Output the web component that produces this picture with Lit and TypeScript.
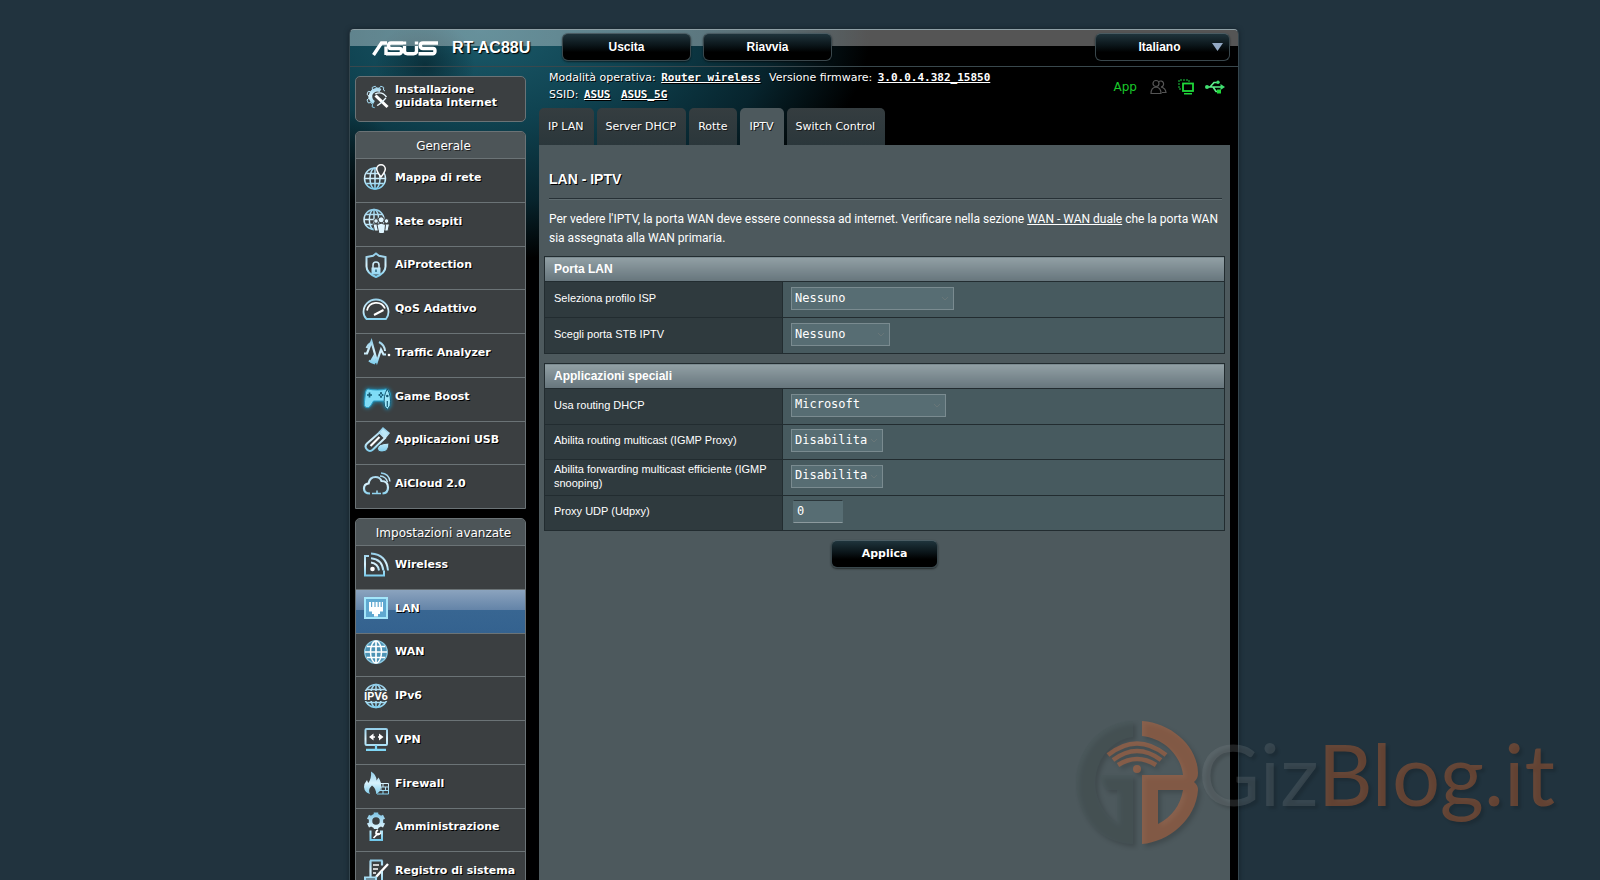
import { LitElement, html, css, svg } from "lit";
import { customElement, state } from "lit/decorators.js";

const icons: Record<string, unknown> = {
  wizard: svg`<path d="M23 9l-1.500-1 .2-2.600-2.900-1.200-1.600 2h-2.400l-1.600-2-3 1.200.3 2.600-1.700 1.700-2.600-.3-1.200 3 2 1.600v2.300l-2 1.600 1.200 3 2.600-.3 1.700 1.700-.3 2.600 2.500.8" stroke-width="1" fill="none"/><path d="M18.500 8.500a6.800 6.800 0 1 0-6.500 12" stroke-width="3.600"/><path d="M13.500 13.500l12 11.500" stroke="#fff" stroke-width="3"/><path d="M13 12c5-2.500 9-.5 11.500 3M15 23.500c3-1 5-3.500 9-7.500" stroke="#e8f8ff" stroke-width="1.300"/>`,
  map: svg`<circle cx="13" cy="15.500" r="10.500"/><ellipse cx="13" cy="15.500" rx="5" ry="10.500"/><path d="M13 5.500v20M2.500 15.500h21M4.500 10.500h15M4.600 20.500h16.800"/><path d="M19 14c-2.800-3.500-4.300-5.500-4.300-8a4.300 4.300 0 0 1 8.600 0c0 2.500-1.500 4.500-4.300 8z" fill="#3b3f41" stroke="#fff"/>`,
  guest: svg`<circle cx="12" cy="12.500" r="10"/><ellipse cx="12" cy="12.500" rx="4.700" ry="10"/><path d="M12 2.500v20M2 12.500h20M3.500 7.500h17M3.500 17.500h10"/><g fill="#dff5ff" stroke="#3b3f41" stroke-width="1"><circle cx="14" cy="14" r="2.300"/><circle cx="24.500" cy="14" r="2.300"/><path d="M11 17h5.500v7h-4zM22 17h5.500l-1.500 7h-4z"/><circle cx="19.200" cy="12.800" r="3"/><path d="M15 17.500q4.200-2.500 8.500 0l-.5 5-1 4h-5l-1-4z"/></g>`,
  shield: svg`<path d="M14 2.500l3 2.300 6.500 1.200v9.500q0 6.500-9.500 10.500q-9.500-4-9.500-10.500V6l6.500-1.200z" stroke-width="2"/><path d="M11 17v-3a3 3 0 0 1 6 0v3"/><rect x="9.500" y="16.500" width="9" height="7" fill="url(#ice)" stroke="none"/><path d="M14 18.500v2.500" stroke="#26647c"/>`,
  gauge: svg`<path d="M4.500 24h19.500q2.500-3 2.500-7a12.500 12.500 0 0 0-25 0q0 4 3 7z" stroke-width="1.800"/><path d="M5 15.500a9.500 9.500 0 0 1 18-2" stroke="#fff" stroke-width="1.800"/><path d="M12 20l9.500-5" stroke="#fff" stroke-width="2"/>`,
  traffic: svg`<path d="M13 25.500a11 11 0 0 1-6-3M17 4a11 11 0 0 1 6 9M4.500 10q2-4 5-5.500" stroke-width="2"/><path d="M8 23l4-7 3 9q-4 1-7-2z" fill="url(#ice)" stroke="none"/><path d="M2 15.500h3l4.500-12 5.500 20 4-12 2.500 5h2.500" stroke-width="2.200"/><circle cx="27" cy="17" r="1.300" fill="#fff" stroke="none"/>`,
  game: svg`<g transform="translate(2 4)"><path d="M4 3q4 1 9.500 1t8.500-1q3 0 4 4l.5 8-3 5q-3-1-4-5h-10l-3 5q-2 2.500-4.500 1.500t-1.500-6l1-9q.5-3.500 2.500-3.500z" fill="#7fdcf7" stroke="#2a9cc4" stroke-width="1"/><path d="M5.500 6.500v5M3 9h5" stroke="#155a74" stroke-width="1.700"/><g fill="#155a74" stroke="none"><circle cx="15.500" cy="9" r="1.100"/><circle cx="18.500" cy="9" r="1.100"/><circle cx="17" cy="7.200" r="1.100"/><circle cx="17" cy="10.800" r="1.100"/></g><path d="M20.500 20q-1.500-10 2.800-17 4.300 7 2.800 17l-2.800 3.500z" fill="#9fe8fb" stroke="#155a74" stroke-width="1"/><circle cx="23.300" cy="10" r="1.300" fill="#155a74" stroke="none"/><path d="M23.300 15v6" stroke="#155a74" stroke-width="1.200"/></g>`,
  usb: svg`<path d="M17.500 6.500L5 17.500q-3 3 0 6t6 0L23 12z" stroke-width="2"/><path d="M17.500 6l3.500-4 6 5-3.500 4.500z" fill="#bde8f8"/><path d="M8.500 20l9-9" stroke="#fff" stroke-width="2.200"/><path d="M15.500 22.500q0-5 11.500-5.500q0 9-7 9-4.500 0-4.500-3.500z" fill="url(#ice)" stroke="#3b3f41" stroke-width="1"/>`,
  cloud: svg`<path d="M8 23.500q-6 0-6-5 0-4.500 4.500-5 1.200-6.500 7-6.500 4.500 0 6 4 6.500 0 6.500 6.500 0 5.500-5.500 6" stroke-width="2.200"/><path d="M10 23.500h9M15 20.500v3" stroke-width="1.500"/><path d="M18 6q6 .5 7.500 6M19 3q8 .5 9 8.500" stroke-width="1.300"/>`,
  wireless: svg`<path d="M7 6H3V25.500h19v-5" stroke-width="2"/><circle cx="10.500" cy="19" r="2.300" fill="#fff" stroke="none"/><path d="M9 12.500q7 1 8 8M9 8.300q11 1 12.300 12.200M9 3.500q15.500 1 17 17" stroke-width="2"/>`,
  lan: svg`<rect x="3" y="4" width="22" height="20" fill="#5fa8d0" stroke="#a4e6fa" stroke-width="2"/><path d="M7 8h2v5h1.200V8h2.200v5h1.200V8h2v5h1.200V8h1.800v5h1.200V8H21v9.500h-3V20h-2v2.500h-4V20h-2v-2.500H7z" fill="#fff" stroke="none"/>`,
  wan: svg`<circle cx="14" cy="14" r="11.300" fill="#4d93b5" stroke="#8cc8e0" stroke-width="1.300"/><ellipse cx="14" cy="14" rx="5.500" ry="11" stroke="#fff"/><path d="M14 3v22M3 14h22M5 8.500h18M5 19.500h18" stroke="#fff" stroke-width="1.700"/>`,
  ipv6: svg`<circle cx="14" cy="14" r="11.500"/><ellipse cx="14" cy="14" rx="5.500" ry="11.500"/><path d="M14 3v22M5 7.500h18M5 20.500h18"/><rect x="1" y="9" width="26" height="10" fill="#3b3f41" stroke="none"/><text class="iptext" x="14" y="17.500" text-anchor="middle">IPV6</text>`,
  vpn: svg`<rect x="3.500" y="4" width="21.500" height="16" rx="1" stroke-width="2"/><path d="M9 12h4M20 12h-4" stroke="#fff"/><path d="M7 12l4.500-3.500v7zM21.500 12l-4.500-3.500v7z" fill="#fff" stroke="none"/><path d="M14 20v4M4 24.800h20" stroke="#7fd6f5" stroke-width="2.200"/>`,
  firewall: svg`<path d="M8 25q-5.500-1.500-6-7 0-3.500 3-7l1.200 3q3.500-4.500 2.800-11.500 5.500 3 5.500 9l2-3q3.500 5.500 2.500 10-1 5-5 6.500 .5-5-4-8.500-4.500 4-2 8.500z" fill="url(#ice)" stroke="none"/><path d="M15 25h11.500v-10.500h-8M16.500 18h10M15.500 21.500h11M21 14.500V18M19 18v3.500M23.500 18v3.500M21 21.500V25" stroke-width="1"/>`,
  admin: svg`<path d="M14 2.500v-3M14 16v-3M6 3.800l3 1.500M19 11l3 1.500M6 12.500l3-1.500M19 5.300l3-1.500" stroke-width="4.500"/><circle cx="14" cy="8" r="5.500" stroke-width="3.500"/><path d="M9.500 18.500h-1v8.500h11.500v-8.500h-2" stroke-width="2"/><path d="M11.500 25l5-5M16 17q-3 1.500-1.500 5M19 19.500q-2 3-4.500 1.500" stroke="#fff" stroke-width="1.700"/>`,
  log: svg`<path d="M8 3.500h12.500M8.500 3.500v17M20 3.500v5" stroke-width="2.200"/><path d="M11 8h6M11 12h5M11 16h3" stroke="#fff" stroke-width="1.500"/><path d="M26 7L14 20" stroke="#fff" stroke-width="2.400"/><path d="M3 20.500h11v3H3zM20 14v12H6" stroke-width="2"/>`,
};

const general = [
  ["map", "Mappa di rete"],
  ["guest", "Rete ospiti"],
  ["shield", "AiProtection"],
  ["gauge", "QoS Adattivo"],
  ["traffic", "Traffic Analyzer"],
  ["game", "Game Boost"],
  ["usb", "Applicazioni USB"],
  ["cloud", "AiCloud 2.0"],
];

const advanced = [
  ["wireless", "Wireless"],
  ["lan", "LAN"],
  ["wan", "WAN"],
  ["ipv6", "IPv6"],
  ["vpn", "VPN"],
  ["firewall", "Firewall"],
  ["admin", "Amministrazione"],
  ["log", "Registro di sistema"],
];

@customElement("app-root")
export class AppRoot extends LitElement {
  @state() private active = "LAN";

  static styles = css`
    :host {
      display: block;
      position: relative;
      height: 100vh;
      overflow: hidden;
      background: #21333e;
      color: #fff;
      font: 11px/17px "DejaVu Sans", Verdana, sans-serif;
    }
    * { box-sizing: border-box; }
    a { color: inherit; }
    .page { padding: 29px 12px 0 0; }
    .frame {
      width: 890px;
      max-width: 100%;
      min-height: 100vh;
      margin: 0 auto;
      border: 1px solid #34454d;
      border-top-color: #8fa0a6;
      border-bottom: 0;
      border-radius: 5px 5px 0 0;
      box-shadow: 0 0 5px #14212a;
      overflow: hidden;
      background:
        radial-gradient(ellipse 50px 45px at 75px 35px, #06212aaa, transparent),
        radial-gradient(ellipse 70px 130px at 0 210px, #000c 30%, transparent),
        radial-gradient(ellipse 390px 230px at 130px 0, #1b5a6a 0, #0f4250 40%, #07242d 75%, transparent 100%),
        #000;
    }
    .top {
      display: flex;
      align-items: center;
      height: 37px;
      padding: 0 8px 3px 22px;
      border-bottom: 1px solid #39484d;
      background: linear-gradient(#ffffff55 0 16px, #ffffff00 16px);
    }
    .logo { width: 66px; height: 15px; margin-top: 3px; }
    .model {
      flex: 0 0 110px;
      margin: 3px 0 0 14px;
      font: bold 16px/20px "Liberation Sans", Arial, sans-serif;
      text-shadow: 1px 1px 1px #000;
    }
    .btn {
      height: 28px;
      padding: 0;
      border: 1px solid #39474c;
      border-top-color: #4a5c63;
      border-radius: 6px;
      color: #fff;
      background: linear-gradient(#1f343c, #0a1418 45%, #000 70%);
      font: bold 12px/16px "Liberation Sans", Arial, sans-serif;
      text-shadow: 1px 1px 0 #000;
      box-shadow: 0 1px 2px #0008;
    }
    .nav { width: 129px; margin-right: 12px; }
    .lang {
      width: 135px;
      margin-left: auto;
      padding-right: 6px;
      appearance: none;
      text-align-last: center;
      background:
        url("data:image/svg+xml,%3Csvg xmlns='http://www.w3.org/2000/svg' width='11' height='8'%3E%3Cpath d='M0 0h11L5.500 8z' fill='%2393a9c4'/%3E%3C/svg%3E") no-repeat right 6px center,
        linear-gradient(#1f343c, #0a1418 45%, #000 70%);
    }
    .body { display: flex; gap: 13px; padding: 0 8px 0 5px; }
    .side {
      display: flex;
      flex-direction: column;
      flex: 0 0 171px;
      padding-top: 9px;
      gap: 9px;
    }
    .card {
      border: 1px solid #6b7376;
      border-radius: 5px 5px 0 0;
      background: #3b3f41;
    }
    .item {
      display: flex;
      align-items: center;
      gap: 5px;
      padding: 0 0 6px 6px;
      border-top: 1px solid #6b7376;
      font-weight: bold;
      line-height: 13px;
      text-decoration: none;
      text-shadow: 1px 1px 0 #000;
      white-space: nowrap;
    }
    .wizard { height: 46px; border-radius: 5px; border: 1px solid #6b7376; background: #3b3f41; }
    .head {
      height: 26px;
      margin: 0;
      padding-left: 6px;
      border-radius: 4px 4px 0 0;
      background: #4d5558;
      font-size: 12px;
      font-weight: normal;
      line-height: 28px;
      text-align: center;
      text-shadow: 1px 1px 0 #222;
    }
    .menu { display: grid; grid-auto-rows: 1fr; height: 350px; }
    .on { background: linear-gradient(#8ba3be, #6484a8 46%, #386692 47%, #34628f); }
    .icon {
      flex: none;
      width: 28px;
      height: 28px;
      overflow: visible;
      fill: none;
      stroke: url(#ice);
      stroke-width: 1.500;
    }
    .glow { filter: drop-shadow(0 0 2px #1b9cc8); }
    .iptext { font: bold 11px "Roboto", sans-serif; fill: #fff; stroke: none; text-shadow: none; }
    .main { display: flex; flex-direction: column; flex: 1; min-width: 0; }
    .info { display: flex; justify-content: space-between; height: 41px; padding: 2px 5px 0 10px; }
    .info p { margin: 0; text-shadow: 1px 1px 0 #000; }
    .mono { margin: 0 5px 0 2px; font: bold 11px/17px "DejaVu Sans Mono", monospace; }
    .status { display: flex; align-items: center; gap: 11px; padding-bottom: 3px; }
    .app { margin-right: 2px; color: #19c82a; font: 12px/17px "DejaVu Sans", Verdana, sans-serif; text-decoration: none; }
    .stat { display: block; fill: none; }
    .tabs { display: flex; gap: 3px; }
    .tab {
      padding: 10px 10px 10px 9px;
      border-radius: 5px 5px 0 0;
      background: linear-gradient(#353d40, #2b373b);
      text-decoration: none;
      text-shadow: 1px 1px 0 #1a1a1a;
    }
    .cur { background: #4d595d; }
    .panel {
      min-height: 740px;
      padding: 24px 5px 0;
      background: #4d595d;
      font: 12px/19px "Liberation Sans", Arial, sans-serif;
    }
    .title {
      margin: 0 3px 11px 5px;
      padding-bottom: 9px;
      border-bottom: 1px solid #273136;
      box-shadow: 0 1px 0 #5f6c70;
      font-size: 14px;
      line-height: 20px;
      text-shadow: 1px 1px 0 #000;
    }
    .intro { margin: 0 3px 8px 5px; font-family: Roboto, Arial, sans-serif; }
    .grid {
      width: 100%;
      margin-bottom: 9px;
      border: 1px solid #222c30;
      border-collapse: collapse;
      table-layout: fixed;
    }
    .lab { width: 238px; }
    .grid thead th {
      height: 25px;
      padding: 0 9px;
      border: 0;
      background: linear-gradient(#92a0a5, #66757c);
      font-size: 12px;
      line-height: 14px;
      font-weight: bold;
      text-align: left;
    }
    .grid tbody th {
      padding: 0 9px 3px;
      background: #2f3a3e;
      font-size: 11px;
      font-weight: normal;
      line-height: 14px;
      text-align: left;
    }
    .grid tbody tr { height: 35px; border-top: 1px solid #222c30; }
    .grid td { padding: 0 8px 2px; background: #475a5f; border-left: 1px solid #222c30; line-height: 0; }
    .two { height: 98px; }
    .four { height: 168px; }
    .sel, .num {
      height: 23px;
      padding: 0 3px 2px;
      border: 1px solid #7a8b90;
      border-radius: 0;
      color: #fff;
      font: 12px/16px "DejaVu Sans Mono", monospace;
      background: #576d73;
    }
    .sel {
      appearance: none;
      background: #576d73 url("data:image/svg+xml,%3Csvg xmlns='http://www.w3.org/2000/svg' width='8' height='5'%3E%3Cpath d='M1 1l3 3 3-3' fill='none' stroke='%23687678'/%3E%3C/svg%3E") no-repeat right 4px center;
    }
    .w163 { width: 163px; }
    .w99 { width: 99px; }
    .w155 { width: 155px; }
    .w92 { width: 92px; }
    .num { width: 50px; margin-left: 2px; border-color: #2b363a #576d73 #8c9a9e; }
    .apply { display: block; width: 107px; margin: 0 auto; font: bold 11px/16px "DejaVu Sans", Verdana, sans-serif; }
    .mark {
      position: absolute;
      right: 45px;
      bottom: 34px;
      display: flex;
      align-items: center;
      color: #bc5f3070;
      font: 85px/106px "Lato", sans-serif;
      text-shadow: 3px 3px 3px #0002;
      pointer-events: none;
    }
    .word { padding-bottom: 20px; }
    .ring { display: block; overflow: visible; filter: drop-shadow(3px 3px 2px #0005); }
    .grey { color: #7a848840; }
  `;

  private icon(name: string) {
    return html`<svg class="icon ${name === "game" ? "glow" : ""}" viewBox="0 0 28 28" aria-hidden="true">${icons[name]}</svg>`;
  }

  private menu(title: string, items: string[][]) {
    return html`<nav class="card">
      <h2 class="head">${title}</h2>
      <div class="menu">
        ${items.map(
          ([ic, label]) => html`<a href="#" class="item ${label === this.active ? "on" : ""}"
            @click=${(e: Event) => { e.preventDefault(); this.active = label; }}>${this.icon(ic)}<span>${label}</span></a>`
        )}
      </div>
    </nav>`;
  }

  private choice(id: string, label: string, size: string, options: string[]) {
    return html`<tr>
      <th scope="row"><label for=${id}>${label}</label></th>
      <td><select id=${id} class="sel ${size}">${options.map((o) => html`<option>${o}</option>`)}</select></td>
    </tr>`;
  }

  render() {
    return html`
      <div class="page">
        <div class="frame">
          <header class="top">
            <svg class="logo" viewBox="0 0 66 15" role="img" aria-label="ASUS" fill="none" stroke="#fff" stroke-width="3">
              <defs>
                <linearGradient id="ice" gradientUnits="userSpaceOnUse" x1="0" y1="0" x2="0" y2="28">
                  <stop offset="0" stop-color="#7fc4e4"/><stop offset=".5" stop-color="#d8f2fd"/><stop offset="1" stop-color="#6cc6ea"/>
                </linearGradient>
              </defs>
              <path d="M1.500 14L9.500 2H15M14 5.500v8.500" stroke-width="3.400"/>
              <path d="M31 2H19q-2.500 0-2.500 2.700t2.500 2.800h8.500q2 0 2 2.500t-2 2.700H14M32.500 5V10q0 2.700 3 2.700h6q3 0 3-2.700V5M66 2H51q-2.700 0-2.700 2.700T51 7.500h10q2 0 2 2.500t-2 2.700H46.500" stroke-width="3.400"/>
              <path d="M31 2h3.200M42.800 2h3.400"/>
            </svg>
            <span class="model">RT-AC88U</span>
            <button class="btn nav">Uscita</button>
            <button class="btn nav">Riavvia</button>
            <select class="btn lang" aria-label="Lingua"><option>Italiano</option></select>
          </header>
          <div class="body">
            <aside class="side">
              <a href="#" class="item wizard">${this.icon("wizard")}<span>Installazione<br>guidata Internet</span></a>
              ${this.menu("Generale", general)} ${this.menu("Impostazioni avanzate", advanced)}
            </aside>
            <main class="main">
              <div class="info">
                <div>
                  <p>Modalità operativa: <a class="mono" href="#">Router wireless</a> Versione firmware: <a class="mono" href="#">3.0.0.4.382_15850</a></p>
                  <p>SSID: <a class="mono" href="#">ASUS</a> <a class="mono" href="#">ASUS_5G</a></p>
                </div>
                <div class="status">
                  <a class="app" href="#">App</a>
                  <svg class="stat" width="17" height="16" viewBox="0 0 17 16" stroke="#555" stroke-width="1.200"><circle cx="6" cy="4.500" r="3"/><path d="M9 2.500a3 3 0 1 1 2 5.500q4.500 1 5 5.500h-4M1 14.500q0-6 5-6.500 5 .5 5 6.500z"/></svg>
                  <svg class="stat" width="16" height="16" viewBox="0 0 16 16" stroke="#1fd83a"><path d="M3 10H1V1h10v2" stroke="#12852a" stroke-width="1.500" stroke-dasharray="2 1"/><rect x="5" y="4.500" width="10" height="7.500" stroke-width="1.800"/><path d="M6 14.800h8" stroke-width="1.500"/></svg>
                  <svg class="stat" width="20" height="14" viewBox="0 0 20 14" stroke="#5df08a" stroke-width="1.700"><path d="M2 7h15M5 7l4-4.500h3M8 7l3 4.500h2"/><g fill="#3fe070" stroke="none"><circle cx="2" cy="7" r="2"/><path d="M15.500 4l4.500 3-4.500 3z"/><circle cx="13" cy="2.300" r="1.700"/><path d="M12 9.500h4v4h-4z" fill="#1fd83a"/></g></svg>
                </div>
              </div>
              <nav class="tabs">
                <a class="tab" href="#">IP LAN</a>
                <a class="tab" href="#">Server DHCP</a>
                <a class="tab" href="#">Rotte</a>
                <a class="tab cur" href="#">IPTV</a>
                <a class="tab" href="#">Switch Control</a>
              </nav>
              <section class="panel">
                <h1 class="title">LAN - IPTV</h1>
                <p class="intro">Per vedere l'IPTV, la porta WAN deve essere connessa ad internet. Verificare nella sezione <a href="#">WAN - WAN duale</a> che la porta WAN sia assegnata alla WAN primaria.</p>
                <table class="grid two">
                  <colgroup><col class="lab"><col></colgroup>
                  <thead><tr><th colspan="2">Porta LAN</th></tr></thead>
                  <tbody>
                    ${this.choice("isp", "Seleziona profilo ISP", "w163", ["Nessuno"])}
                    ${this.choice("stb", "Scegli porta STB IPTV", "w99", ["Nessuno"])}
                  </tbody>
                </table>
                <table class="grid four">
                  <colgroup><col class="lab"><col></colgroup>
                  <thead><tr><th colspan="2">Applicazioni speciali</th></tr></thead>
                  <tbody>
                    ${this.choice("dhcp", "Usa routing DHCP", "w155", ["Microsoft"])}
                    ${this.choice("igmp", "Abilita routing multicast (IGMP Proxy)", "w92", ["Disabilita"])}
                    ${this.choice("snoop", "Abilita forwarding multicast efficiente (IGMP snooping)", "w92", ["Disabilita"])}
                    <tr>
                      <th scope="row"><label for="udp">Proxy UDP (Udpxy)</label></th>
                      <td><input id="udp" class="num" type="text" value="0"></td>
                    </tr>
                  </tbody>
                </table>
                <button class="btn apply">Applica</button>
              </section>
            </main>
          </div>
        </div>
      </div>
      <div class="mark">
        <svg class="ring" width="124" height="124" viewBox="0 0 124 124" aria-hidden="true">
          <path d="M59 0A57 61.500 0 0 0 59 123V54H26q1 9 7 15h10v33A42 46 0 0 1 59 16z" fill="#475558" fill-opacity=".5"/>
          <path fill-rule="evenodd" d="M68 0C98 2 124 26 124 52q0 6-4 9 4 3 4 8C122 99 94 121 68 123V54H109C107 34 89 17 68 15zM84 69v34Q105 92 109 69z" fill="#c8683a" fill-opacity=".48"/>
          <g fill="none" stroke="#c8683a" stroke-opacity=".48" stroke-width="4.500"><path d="M34 34Q63 11 92 34M39 39Q63 21 87 39M44 44Q63 32 82 44"/></g>
          <circle cx="63" cy="48" r="4" fill="#c8683a" fill-opacity=".5"/>
        </svg>
        <span class="word"><span class="grey">Giz</span>Blog.it</span>
      </div>
    `;
  }
}
